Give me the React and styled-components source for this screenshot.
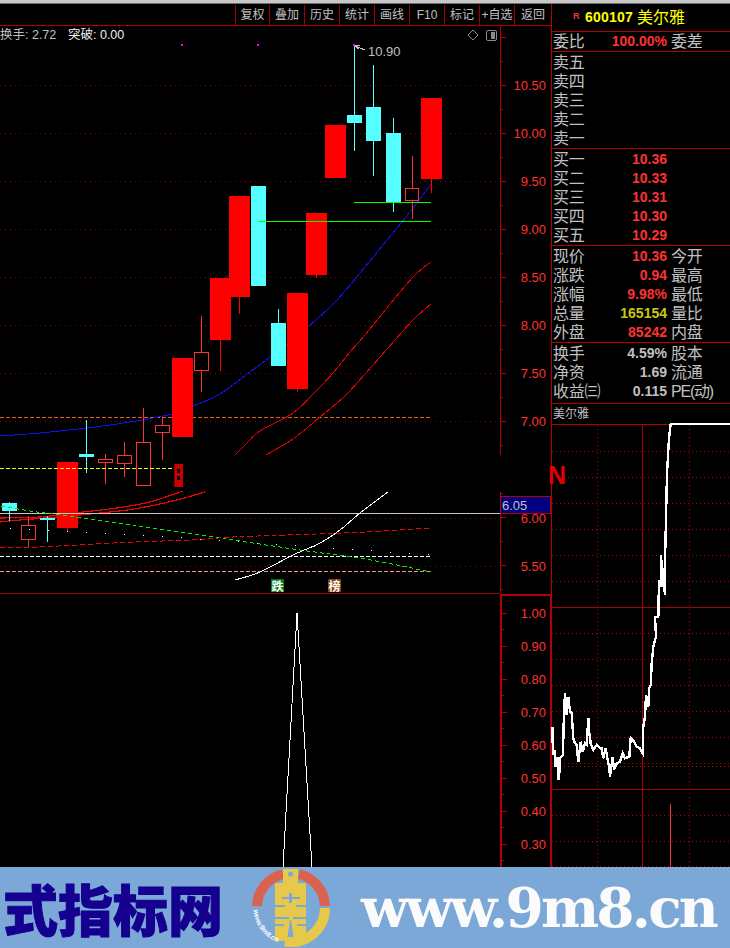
import React from "react";
import styled, { createGlobalStyle } from "styled-components";

const CJK = '"Liberation Sans", "Noto Sans CJK SC", sans-serif';

const Global = createGlobalStyle`
  html, body { margin: 0; padding: 0; background: #000; }
  body { font-family: ${CJK}; }
`;

const Page = styled.div`
  width: 730px;
  height: 948px;
  overflow: hidden;
  background: #000;
  display: flex;
  flex-direction: column;
  position: relative;
`;
const TopEdge = styled.div`
  height: 3px;
  background: #c8c8c8;
  border-bottom: 1px solid #707070;
  flex: none;
`;
const Main = styled.div`
  display: grid;
  grid-template-columns: 551px 179px;
  height: 863px;
  flex: none;
`;
const LeftColumn = styled.div`
  display: flex;
  flex-direction: column;
  position: relative;
  min-width: 0;
`;
const Toolbar = styled.div`
  height: 21px;
  flex: none;
  display: flex;
  justify-content: flex-end;
  border-bottom: 1px solid #a80000;
`;
const ToolButton = styled.div`
  width: ${(p) => p.$w}px;
  box-sizing: border-box;
  border-left: 1px solid #a80000;
  color: #c0c0c0;
  font-size: 12px;
  line-height: 20px;
  height: 20px;
  margin-top: 1px;
  text-align: center;
  white-space: nowrap;
`;
const ChartSvg = styled.svg`
  display: block;
  width: 551px;
  flex: 1;
`;
const Legend = styled.div`
  position: absolute;
  left: 0;
  top: 24px;
  display: flex;
  gap: 14px;
  font-size: 12.5px;
  line-height: 15px;
`;
const LegendItem = styled.span`
  color: ${(p) => p.$c};
  width: 54px;
  white-space: nowrap;
`;
const NMark = styled.div`
  position: absolute;
  left: 548px;
  top: 458px;
  color: #e00000;
  font: bold 25px/26px "Liberation Sans", sans-serif;
`;
const Panel = styled.div`
  border-left: 1px solid #b40000;
  display: flex;
  flex-direction: column;
  min-width: 0;
`;
const Header = styled.div`
  height: 27px;
  flex: none;
  border-bottom: 1px solid #b40000;
  display: flex;
  align-items: center;
  padding-left: 21px;
`;
const RBadge = styled.span`
  color: #ff3232;
  font: bold 9px/10px "Liberation Sans", sans-serif;
  align-self: flex-start;
  margin-top: 7px;
  width: 12px;
`;
const Code = styled.span`
  color: #ffff00;
  font: bold 14px/27px "Liberation Sans", sans-serif;
  letter-spacing: 0.2px;
  width: 52px;
`;
const HeadName = styled.span`
  color: #ffff00;
  font-size: 16px;
  line-height: 27px;
`;
const Section = styled.div`
  flex: none;
  height: ${(p) => p.$h}px;
  padding-top: ${(p) => p.$pad || 0}px;
  box-sizing: content-box;
  border-bottom: 1px solid #b40000;
  overflow: hidden;
`;
const Row = styled.div`
  display: grid;
  grid-template-columns: 115px 1fr;
  height: 19px;
  line-height: 19px;
  position: relative;
  white-space: nowrap;
`;
const RowLeft = styled.div`
  display: flex;
  justify-content: space-between;
  padding-left: 1px;
  min-width: 0;
`;
const Label = styled.span`
  color: #c0c0c0;
  font-size: 16px;
  letter-spacing: -0.2px;
`;
const Value = styled.span`
  color: ${(p) => p.$c || "#ff3232"};
  font-weight: bold;
  font-size: 14px;
`;
const SideLabel = styled(Label)`
  padding-left: 4px;
  letter-spacing: ${(p) => (p.$tight ? "-1.2px" : "-0.2px")};
`;
const NameRow = styled.div`
  height: 20px;
  flex: none;
  border-bottom: 1px solid #b40000;
  color: #c0c0c0;
  font-size: 12px;
  line-height: 20px;
  padding-left: 1px;
`;
const IntradaySvg = styled.svg`
  display: block;
  width: 178px;
  flex: 1;
  min-height: 0;
  overflow: visible;
`;
const Banner = styled.div`
  height: 81px;
  flex: none;
  background: #7ca8d8;
  display: flex;
  align-items: center;
  padding-left: 3px;
  overflow: hidden;
`;
const SiteTitle = styled.div`
  width: 249px;
  flex: none;
  color: #15008f;
  font-family: "Noto Sans CJK SC", sans-serif;
  font-weight: 900;
  font-size: 55px;
  line-height: 81px;
  -webkit-text-stroke: 1px #15008f;
  white-space: nowrap;
`;
const LogoSvg = styled.svg`
  display: block;
  width: 78px;
  height: 78px;
  flex: none;
`;
const SiteUrl = styled.div`
  margin-left: 31px;
  color: #fbfbfb;
  font-family: "DejaVu Serif", serif;
  font-weight: bold;
  font-size: 55px;
  line-height: 81px;
  letter-spacing: -2.8px;
  white-space: nowrap;
`;

const tools = [
  ["复权", 34], ["叠加", 35], ["历史", 35], ["统计", 35], ["画线", 35],
  ["F10", 35], ["标记", 35], ["+自选", 35], ["返回", 37],
];

// [left, width, top, bottom, wickTop, wickBottom, kind]
const candles = [
  [2, 15, 503, 511, 502, 521, "c"],
  [21, 15, 525, 540, 516, 547, "h"],
  [40, 15, 518, 520, 516, 542, "c"],
  [57, 21, 462, 528, 462, 531, "s"],
  [79, 15, 454, 457, 420, 473, "c"],
  [98, 15, 459, 463, 454, 484, "h"],
  [117, 15, 455, 464, 442, 477, "h"],
  [136, 15, 442, 486, 408, 486, "h"],
  [155, 15, 425, 433, 417, 460, "h"],
  [172, 21, 358, 437, 358, 437, "s"],
  [194, 15, 352, 371, 316, 392, "h"],
  [210, 21, 278, 340, 278, 371, "s"],
  [229, 21, 196, 297, 196, 314, "s"],
  [251, 15, 186, 286, 186, 286, "c"],
  [271, 15, 323, 366, 309, 366, "c"],
  [287, 21, 293, 389, 293, 392, "s"],
  [306, 21, 213, 275, 213, 278, "s"],
  [325, 21, 125, 178, 125, 178, "s"],
  [347, 15, 115, 123, 45, 151, "c"],
  [366, 15, 107, 141, 65, 176, "c"],
  [386, 15, 133, 202, 118, 212, "c"],
  [405, 14, 188, 201, 156, 219, "h"],
  [421, 21, 98, 179, 98, 193, "s"],
];

const pts = (a) => a.map((p) => p.join(",")).join(" ");

// Smooth curve through the sampled points of an indicator line.
const smooth = (a) => {
  let d = `M${a[0][0]} ${a[0][1]}`;
  for (let i = 0; i < a.length - 1; i++) {
    const p0 = a[i - 1] || a[i];
    const p1 = a[i];
    const p2 = a[i + 1];
    const p3 = a[i + 2] || p2;
    const c1x = p1[0] + (p2[0] - p0[0]) / 6;
    const c1y = p1[1] + (p2[1] - p0[1]) / 6;
    const c2x = p2[0] - (p3[0] - p1[0]) / 6;
    const c2y = p2[1] - (p3[1] - p1[1]) / 6;
    d += `C${c1x.toFixed(1)} ${c1y.toFixed(1)} ${c2x.toFixed(1)} ${c2y.toFixed(1)} ${p2[0]} ${p2[1]}`;
  }
  return d;
};

const blue = [[0,436],[40,433],[87,428],[130,422],[172,414],[193,406],[220,394],[250,372],[286,345],[308,327],[337,300],[365,267],[387,240],[410,212],[431,184]];
const red1 = [[235,455],[246,444],[260,431],[293,413],[315,392],[333,373],[350,352],[365,335],[395,298],[415,275],[431,262]];
const red2 = [[266,455],[293,439],[320,417],[345,396],[365,374],[395,340],[415,318],[431,304]];
const redA = [[0,518],[40,517],[83,512],[117,508],[150,502],[183,491]];
const redB = [[0,522],[20,520],[57,517],[110,512],[140,508],[177,500],[205,492]];
const redD = [[0,548],[40,547],[77,545],[133,542],[190,540],[233,537],[287,535],[365,532],[431,528]];
const greenD = [[1,506],[37,512],[77,517],[117,523],[150,528],[200,535],[233,540],[300,550],[365,559],[431,572]];
const white = [[235,580],[260,572],[293,555],[320,543],[340,530],[360,513],[388,492]];

const dots = Array.from({ length: 23 }, (_, i) => [9.5 + 19 * i, 528 + i + (i > 8 ? (i - 8) * 0.3 : 0)]);

const gridYs = [85, 133, 181, 229, 277, 325, 373, 421, 518, 566];
const axisLabels = [
  ["10.50", 85], ["10.00", 133], ["9.50", 181], ["9.00", 229], ["8.50", 277],
  ["8.00", 325], ["7.50", 373], ["7.00", 421], ["6.00", 518], ["5.50", 566],
  ["1.00", 613], ["0.90", 646], ["0.80", 679], ["0.70", 712], ["0.60", 745],
  ["0.50", 778], ["0.40", 811], ["0.30", 844],
];
const upperTicks = Array.from({ length: 24 }, (_, i) => 37 + i * 24).filter((y) => y < 455 || y > 492);
const lowerTicks = Array.from({ length: 16 }, (_, i) => 613 + i * 16.5);

const Candle = ({ c }) => {
  const [x, w, top, bottom, wt, wb, kind] = c;
  const col = kind === "c" ? "#55ffff" : kind === "s" ? "#ff0000" : "#ff3232";
  const mid = x + Math.floor(w / 2) + 0.5;
  return (
    <g shapeRendering="crispEdges">
      <line x1={mid} x2={mid} y1={wt} y2={wb} stroke={col} />
      {kind === "h" ? (
        <rect x={x + 0.5} y={top + 0.5} width={w - 1} height={bottom - top - 1} fill="#000" stroke={col} />
      ) : (
        <rect x={x} y={top} width={w} height={bottom - top} fill={col} />
      )}
    </g>
  );
};

const AxisText = styled.text`
  fill: #ff3232;
  font: 13px "Liberation Sans", sans-serif;
  text-anchor: end;
  dominant-baseline: central;
`;
const BadgeText = styled.text`
  fill: #fff;
  font: bold 12px "Noto Sans CJK SC", sans-serif;
  text-anchor: middle;
  dominant-baseline: central;
`;
const PriceTag = styled.text`
  fill: #c0c0c0;
  font: 13px "Liberation Sans", sans-serif;
`;

const Chart = () => (
  <ChartSvg viewBox="0 26 551 841" preserveAspectRatio="none">
    <g shapeRendering="crispEdges" fill="none">
      {gridYs.map((y) => (
        <line key={y} x1="0" x2="500" y1={y + 0.5} y2={y + 0.5} stroke="#8c0000" strokeDasharray="1 4" />
      ))}
      <line x1="0" x2="430" y1="417.5" y2="417.5" stroke="#e0601c" strokeDasharray="4 2" />
      <path d={smooth(blue)} stroke="#1010f0" />
      <path d={smooth(red1)} stroke="#e00000" />
      <path d={smooth(red2)} stroke="#e00000" />
      <path d={smooth(redA)} stroke="#f00000" strokeWidth="1.2" />
      <path d={smooth(redB)} stroke="#f00000" strokeWidth="1.2" />
    </g>
    {candles.map((c, i) => <Candle key={i} c={c} />)}
    <g shapeRendering="crispEdges" fill="none">
      <line x1="0" x2="173" y1="468.5" y2="468.5" stroke="#ffff00" strokeDasharray="4 2" />
      <line x1="258" x2="431" y1="221.5" y2="221.5" stroke="#00ff00" />
      <line x1="354" x2="431" y1="202.5" y2="202.5" stroke="#00ff00" />
      <line x1="0" x2="500" y1="513.5" y2="513.5" stroke="#c8c8c8" />
      <line x1="0" x2="431" y1="556.5" y2="556.5" stroke="#ffffff" strokeDasharray="4 2" />
      <line x1="0" x2="431" y1="571.5" y2="571.5" stroke="#f09090" strokeDasharray="4 2" />
      <path d={smooth(redD)} stroke="#f00000" strokeDasharray="5 3" />
      <path d={smooth(greenD)} stroke="#00f000" strokeDasharray="4 3" />
      <path d={smooth(white)} stroke="#ffffff" />
      <polyline points={pts([[283, 867], [297, 613], [312, 867]])} stroke="#ffffff" />
      <line x1="0" x2="500" y1="593.5" y2="593.5" stroke="#a80000" />
      <line x1="355" x2="365" y1="46" y2="50" stroke="#c0c0c0" />
      <line x1="355" x2="360" y1="46" y2="45" stroke="#c0c0c0" />
      <line x1="355" x2="359" y1="46" y2="49" stroke="#c0c0c0" />
      {dots.map(([x, y], i) => <rect key={i} x={x} y={y} width="1" height="1" fill="#fff" />)}
      <rect x="181" y="44" width="2" height="2" fill="#ff00ff" />
      <rect x="257" y="44" width="2" height="2" fill="#ff00ff" />
      <rect x="353" y="44" width="2" height="2" fill="#ff00ff" />
      <path d="M174 464h9v23h-9z M177 469v4h3v-4z M177 476v4h3v-4z" fill="#c80000" fillRule="evenodd" />
      <rect x="174" y="464" width="1" height="23" fill="#900000" />

      <line x1="500.5" x2="500.5" y1="26" y2="455" stroke="#b40000" />
      <line x1="500.5" x2="500.5" y1="492" y2="593" stroke="#b40000" />
      {upperTicks.map((y) => (
        <line key={y} x1="501" x2={(y - 37) % 48 === 0 ? 506 : 503} y1={y + 0.5} y2={y + 0.5} stroke="#b40000" />
      ))}
      <rect x="500" y="594" width="51" height="2" fill="#b40000" />
      <rect x="500" y="594" width="2" height="273" fill="#b40000" />
      <rect x="550" y="594" width="1" height="273" fill="#b40000" />
      {lowerTicks.map((y, i) => (
        <line key={y} x1="502" x2={i % 2 === 0 ? 507 : 504} y1={Math.floor(y) + 0.5} y2={Math.floor(y) + 0.5} stroke="#b40000" />
      ))}
      <rect x="500.5" y="496.5" width="50" height="17" fill="#000080" stroke="#b40000" />
    </g>
    {axisLabels.map(([t, y]) => (
      <AxisText key={t} x="546" y={y}>{t}</AxisText>
    ))}
    <PriceTag x="502" y="510">6.05</PriceTag>
    <PriceTag x="368" y="56">10.90</PriceTag>

    <g fill="none" stroke="#8a8a8a">
      <path d="M473 30l5 5-5 5-5-5z" />
      <rect x="486.5" y="30.5" width="10" height="10" rx="1.5" />
      <rect x="491" y="32" width="4" height="7" fill="#8a8a8a" stroke="none" />
    </g>

    <rect x="271" y="579" width="13" height="13" fill="#007a10" shapeRendering="crispEdges" />
    <BadgeText x="277.5" y="585.5">跌</BadgeText>
    <rect x="328" y="579" width="13" height="13" fill="#85430c" shapeRendering="crispEdges" />
    <BadgeText x="334.5" y="585.5">榜</BadgeText>
  </ChartSvg>
);

const intradayRaw = [[37,920],[39,1005],[44,990],[47,1040],[52,1010],[55,1080],[60,1045],[60,1015],[68,1005],[70,960],[72,875],[75,820],[80,885],[85,830],[90,875],[95,880],[100,955],[105,970],[110,975],[115,1025],[122,965],[128,995],[135,970],[140,975],[145,895],[148,940],[152,970],[160,990],[170,975],[180,985],[185,985],[190,1015],[197,985],[203,1020],[208,1045],[210,1070],[218,1010],[222,1050],[230,1030],[240,1025],[248,1000],[255,1015],[268,1010],[272,955],[282,965],[290,980],[300,985],[308,1000],[310,920],[315,890],[318,825],[325,860],[328,805],[332,795],[335,730],[340,680],[348,650],[345,590],[355,590],[357,480],[365,500],[362,405],[370,470],[375,525],[375,425],[378,295],[381,160],[387,55],[392,12],[570,12]];
const intraday = intradayRaw.map(([x, y]) => [+(540 + x / 3).toFixed(1), +(420 + y / 3).toFixed(1)]);
const dayDotted = [451, 477, 503, 529, 555, 581, 633, 659, 685, 711, 737, 763, 766, 815, 841, 866];

const Intraday = () => (
  <IntradaySvg viewBox="552 425 178 442" preserveAspectRatio="none">
    <g shapeRendering="crispEdges" fill="none">
      {dayDotted.map((y) => (
        <line key={y} x1="552" x2="730" y1={y + 0.5} y2={y + 0.5} stroke="#b40000" strokeDasharray="1 3" />
      ))}
      <line x1="597.5" x2="597.5" y1="425" y2="867" stroke="#b40000" strokeDasharray="1 3" />
      <line x1="689.5" x2="689.5" y1="425" y2="867" stroke="#b40000" strokeDasharray="1 3" />
      <line x1="552" x2="730" y1="607.5" y2="607.5" stroke="#a80000" />
      <line x1="552" x2="730" y1="789.5" y2="789.5" stroke="#a80000" />
      <line x1="642.5" x2="642.5" y1="425" y2="867" stroke="#b40000" />
      <line x1="670.5" x2="670.5" y1="804" y2="867" stroke="#ff3232" />
    </g>
    <polyline points={pts(intraday)} fill="none" stroke="#fff" strokeWidth="2.4" shapeRendering="crispEdges" />
  </IntradaySvg>
);

const Logo = () => (
  <LogoSvg viewBox="0 0 78 78">
    <g fill="none" strokeWidth="10">
      <path d="M5 37 A34 34 0 0 1 31 5" stroke="#d9634f" />
      <path d="M47 5 A34 34 0 0 1 73 37" stroke="#d9634f" />
      <path d="M73 39 A34 34 0 0 1 33 72.5" stroke="#e6c84a" />
    </g>
    <path fill="#e6c84a" d="M31 0h15v14h8v58h-12l-3-21h-1l-3 21H23V14h8z" />
    <circle cx="38.5" cy="5" r="2.5" fill="#7ca8d8" />
    <g fill="#7ca8d8">
      <rect x="23" y="36" width="10" height="2" />
      <rect x="44" y="36" width="10" height="2" />
      <rect x="23" y="48" width="14" height="2" />
      <rect x="41" y="48" width="13" height="2" />
      <rect x="23" y="55" width="9" height="2" />
      <rect x="45" y="55" width="9" height="2" />
      <rect x="37" y="24" width="3" height="10" />
      <rect x="30" y="28" width="18" height="2" />
    </g>
    <path id="logoArc" d="M1.5 41 A37 37 0 0 0 31 74.6" fill="none" />
    <text fill="#fff" fontSize="7" fontWeight="bold" fontStyle="italic" fontFamily="Liberation Sans, sans-serif">
      <textPath href="#logoArc">www.9m8.cn</textPath>
    </text>
  </LogoSvg>
);

const sell = ["卖五", "卖四", "卖三", "卖二", "卖一"];
const buy = [["买一", "10.36"], ["买二", "10.33"], ["买三", "10.31"], ["买四", "10.30"], ["买五", "10.29"]];
const quote = [
  ["现价", "10.36", "今开"],
  ["涨跌", "0.94", "最高"],
  ["涨幅", "9.98%", "最低"],
  ["总量", "165154", "量比", "#c8c814"],
  ["外盘", "85242", "内盘"],
];
const stats = [
  ["换手", "4.59%", "股本"],
  ["净资", "1.69", "流通"],
  ["收益㈢", "0.115", "PE(动)", true],
];

const DataRow = ({ r, tight }) => (
  <Row>
    <RowLeft>
      <Label>{r[0]}</Label>
      <Value $c={r[3]}>{r[1]}</Value>
    </RowLeft>
    {r[2] && <SideLabel $tight={tight}>{r[2]}</SideLabel>}
  </Row>
);

export default function App() {
  return (
    <Page>
      <Global />
      <TopEdge />
      <Main>
        <LeftColumn>
          <Toolbar>
            {tools.map(([t, w]) => <ToolButton key={t} $w={w}>{t}</ToolButton>)}
          </Toolbar>
          <Chart />
          <Legend>
            <LegendItem $c="#c0c0c0">换手: 2.72</LegendItem>
            <LegendItem $c="#f0f0f0">突破: 0.00</LegendItem>
          </Legend>
          <NMark>N</NMark>
        </LeftColumn>
        <Panel>
          <Header>
            <RBadge>R</RBadge>
            <Code>600107</Code>
            <HeadName>美尔雅</HeadName>
          </Header>
          <Section $h={19}>
            <DataRow r={["委比", "100.00%", "委差"]} />
          </Section>
          <Section $h={95} $pad={1}>
            {sell.map((s) => <Row key={s}><RowLeft><Label>{s}</Label></RowLeft></Row>)}
          </Section>
          <Section $h={95} $pad={1}>
            {buy.map((b) => <DataRow key={b[0]} r={b} />)}
          </Section>
          <Section $h={95} $pad={1}>
            {quote.map((q) => <DataRow key={q[0]} r={q} />)}
          </Section>
          <Section $h={59} $pad={1}>
            {stats.map((q) => <DataRow key={q[0]} r={[q[0], q[1], q[2], "#c0c0c0"]} tight={q[3]} />)}
          </Section>
          <NameRow>美尔雅</NameRow>
          <Intraday />
        </Panel>
      </Main>
      <Banner>
        <SiteTitle>式指标网</SiteTitle>
        <Logo />
        <SiteUrl>www.9m8.cn</SiteUrl>
      </Banner>
    </Page>
  );
}
